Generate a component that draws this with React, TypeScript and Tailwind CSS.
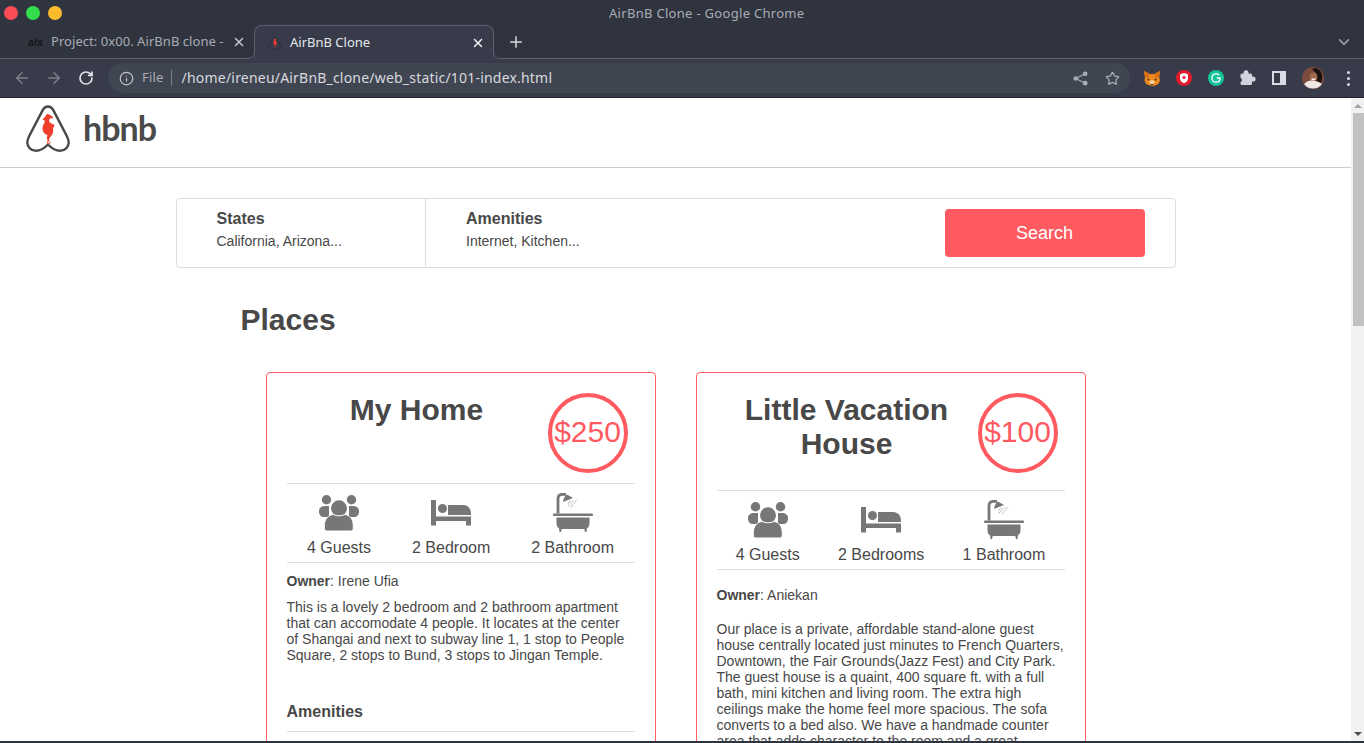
import { ArrowLeft, ArrowRight, ChevronDown, Info, Plus, RotateCw, Star, X } from 'lucide-react';

const chromeFont = 'font-["Noto_Sans",sans-serif]';

function AirLogo({ className, stroke = '#484848', mark = '#f03e2b' }: { className: string; stroke?: string; mark?: string }) {
  return (
    <svg viewBox="0 0 44 47" className={className} fill="none">
      <path
        d="M22 1.500c-2.600 0-4.200 1.500-5.300 3.600L3.200 31c-1.300 2.600-1.900 4.400-1.900 6.400 0 4.800 3.800 8.400 8.600 8.400 4.300 0 8.300-2.300 12.100-6.300 3.800 4 7.800 6.300 12.100 6.300 4.800 0 8.600-3.600 8.600-8.400 0-2-.6-3.800-1.900-6.400L27.300 5.100C26.200 3 24.600 1.500 22 1.500z"
        stroke={stroke}
        strokeWidth="2.400"
      />
      <path
        d="M20.500 9C23 9 25.500 10.500 27.500 13L24 13.500c-1 .8-1 2.200-.5 3.500 1.500 1.500 3 2.500 4 2l1 2-1.500 2c.7 3 0 5.500-1.500 7.500-1.500 1.800-2.700 3-2.500 5.500l-1.500-.5c-1-2.500-.5-4.200 0-5.500-2.800-.5-4.800-3-5-6.500-.1-3 1.500-4.500 2.300-6.500.2-1.500-1.300-2.500-2.300-2.500 1.500-1.500 3-3 4-5z"
        fill={mark}
      />
      <circle cx="22.500" cy="37.500" r="1.400" stroke={mark} strokeWidth="1" />
    </svg>
  );
}

function GuestsIcon() {
  return (
    <svg viewBox="0 0 40 37" className="h-[37px] w-[40px]" fill="#777777">
      <circle cx="7.500" cy="4.800" r="4.700" />
      <circle cx="32.500" cy="4.800" r="4.700" />
      <path d="M0 16c0-3 2.500-5 6-5h4v11H5c-3 0-5-2-5-6z" />
      <path d="M40 16c0-3-2.500-5-6-5h-4v11h5c3 0 5-2 5-6z" />
      <circle cx="20" cy="13.300" r="9" stroke="#ffffff" strokeWidth="2" />
      <path
        d="M5.300 31c0-7 4-11 9-11.500 3.500 1.800 8 1.800 11.500 0 5 .5 8.500 4.500 8.500 11.500v2c0 2-1 3-3 3H8.300c-2 0-3-1-3-3z"
        stroke="#ffffff"
        strokeWidth="1"
      />
    </svg>
  );
}

function BedIcon() {
  return (
    <svg viewBox="0 0 40 26" className="h-[26px] w-[40px]" fill="#777777">
      <rect x="0" y="0" width="5" height="25.500" />
      <circle cx="11.500" cy="8.500" r="4.500" />
      <path d="M17 5h15c5 0 8 3.500 8 9v1H17z" />
      <path d="M5 16.500h35V25.500h-5V21H5z" />
    </svg>
  );
}

function BathIcon() {
  return (
    <svg viewBox="0 0 40 40" className="h-[40px] w-[40px]" fill="#777777">
      <rect x="0" y="20.500" width="40" height="2.500" rx="1" />
      <path d="M3.500 24.500h33V30c0 4-2 6-6 6H9.500c-4 0-6-2-6-6z" />
      <path d="M6 35h3l-1 4H6.500zM31 35h3l-.5 4H32z" />
      <path d="M5 20.500V6C5 2.800 7 1.300 9.500 1.300H13" fill="none" stroke="#777777" strokeWidth="2.800" />
      <path d="M10 9c.5-4 2-6.500 4-7.500L20 5z" />
      <path d="M15 13l6-6M18 14l6-7M15 10l3-3" fill="none" stroke="#aaaaaa" strokeWidth="1.300" strokeDasharray="1 1.200" />
    </svg>
  );
}

function Stat({ icon, label }: { icon: React.ReactNode; label: string }) {
  return (
    <div className="flex flex-col items-center">
      <div className="flex h-[52px] items-center">{icon}</div>
      <span className="text-base leading-[18px]">{label}</span>
    </div>
  );
}

function PlaceCard({
  title,
  price,
  stats,
  owner,
  headerClass,
  ownerClass,
  children,
}: {
  title: string;
  price: string;
  stats: React.ReactNode;
  owner: string;
  headerClass: string;
  ownerClass: string;
  children: React.ReactNode;
}) {
  return (
    <article className="w-[390px] shrink-0 rounded border border-[#ff5a5f] px-5 pt-5 pb-5">
      <div className={`flex items-start ${headerClass}`}>
        <h2 className="w-[260px] text-center text-[30px] font-bold leading-[34px]">{title}</h2>
        <div className="ml-px flex h-20 w-20 shrink-0 items-center justify-center rounded-full border-4 border-[#ff5a5f] pb-1 text-[30px] text-[#ff5a5f]">
          {price}
        </div>
      </div>
      <div className="flex h-[80px] justify-around border-y border-[#dddddd] pt-[3px]">{stats}</div>
      <p className={`text-sm leading-4 ${ownerClass}`}>
        <b>Owner</b>: {owner}
      </p>
      {children}
    </article>
  );
}

export default function App() {
  return (
    <div className="flex h-[743px] w-[1364px] flex-col overflow-hidden bg-white font-['Liberation_Sans',sans-serif] text-[#484848]">
      {/* window title + tabs */}
      <div className={`bg-[#2f343f] ${chromeFont}`}>
        <div className="relative flex h-[25px] items-center pl-[4px]">
          <div className="flex gap-2">
            <span className="h-[14px] w-[14px] rounded-full bg-[#fc4c56]" />
            <span className="h-[14px] w-[14px] rounded-full bg-[#33de4a]" />
            <span className="h-[14px] w-[14px] rounded-full bg-[#fdbc2e]" />
          </div>
          <span className="absolute left-[609px] top-[5px] text-[13px] leading-4 tracking-[0.3px] text-[#a9acb4]">
            AirBnB Clone - Google Chrome
          </span>
        </div>
        <div className="flex h-[34px] items-center border-b border-[#5c606c] pl-[14px]">
          <div className="flex h-full w-[240px] items-center pl-[14px] pr-[8px]">
            <span className="w-[23px] text-[10px] font-bold leading-none text-[#14161b]">alx</span>
            <span className="whitespace-nowrap text-[13px] tracking-[0.05px] text-[#a9acb4]">Project: 0x00. AirBnB clone -</span>
            <X className="ml-auto h-[14px] w-[14px] text-[#c5c7cd]" strokeWidth={2.5} />
          </div>
          <div className="relative flex h-[34px] w-[240px] self-start items-center rounded-t-lg border border-b-0 border-[#5c606c] bg-[#383c4a] pl-[13px] pr-[8px]">
            <svg viewBox="0 0 8 8" className="absolute -left-[8px] bottom-0 h-2 w-2">
              <path d="M0 7.500C5 7.500 7.500 5 7.500 0V8H0z" fill="#383c4a" />
              <path d="M0 7.500C5 7.500 7.500 5 7.500 0" fill="none" stroke="#5c606c" />
            </svg>
            <svg viewBox="0 0 8 8" className="absolute -right-[8px] bottom-0 h-2 w-2">
              <path d="M8 7.500C3 7.500 .5 5 .5 0V8H8z" fill="#383c4a" />
              <path d="M8 7.500C3 7.500 .5 5 .5 0" fill="none" stroke="#5c606c" />
            </svg>
            <AirLogo className="h-[14px] w-[14px]" stroke="#2a2d36" />
            <span className="ml-[8px] text-[13px] text-[#e6e7ea]">AirBnB Clone</span>
            <X className="ml-auto h-[14px] w-[14px] text-[#f0f0f2]" strokeWidth={2.5} />
          </div>
          <Plus className="ml-[13px] h-[18px] w-[18px] text-[#d8dade]" strokeWidth={2} />
          <ChevronDown className="ml-auto mr-[11px] h-[18px] w-[18px] text-[#a9acb4]" strokeWidth={2} />
        </div>
      </div>

      {/* toolbar */}
      <div className={`flex h-[39px] shrink-0 items-center border-b border-[#20232b] bg-[#383c4a] pl-[13px] ${chromeFont}`}>
        <ArrowLeft className="h-[18px] w-[18px] text-[#7d808b]" strokeWidth={2} />
        <ArrowRight className="ml-[14px] h-[18px] w-[18px] text-[#7d808b]" strokeWidth={2} />
        <RotateCw className="ml-[15px] h-[16px] w-[16px] text-[#e0e1e5]" strokeWidth={2.6} />
        <div className="ml-[14px] flex h-[30px] w-[1022px] items-center rounded-full bg-[#404552] pl-[11px] pr-[10px]">
          <Info className="h-[15px] w-[15px] text-[#c2c4ca]" strokeWidth={2} />
          <span className="ml-[8px] text-[13px] tracking-[0.2px] text-[#a9acb4]">File</span>
          <span className="ml-[7px] h-[16px] w-px bg-[#7d808b]" />
          <span className="ml-[10px] text-sm tracking-[0.2px] text-[#d8dade]">/home/ireneu/AirBnB_clone/web_static/101-index.html</span>
          <svg viewBox="0 0 16 16" className="ml-auto h-[15px] w-[15px]" fill="#a9acb4">
            <circle cx="13" cy="3" r="2.500" />
            <circle cx="3" cy="8" r="2.500" />
            <circle cx="13" cy="13" r="2.500" />
            <path d="M3 8l10-5M3 8l10 5" stroke="#a9acb4" strokeWidth="1.200" />
          </svg>
          <Star className="ml-[17px] h-[15px] w-[15px] text-[#a9acb4]" strokeWidth={2} />
        </div>
        <div className="ml-[14px] flex items-center gap-[16px]">
          <svg viewBox="0 0 16 15" className="h-[15px] w-4">
            <path d="M0 0l6 3h4l6-3-.8 6 .8 3.500-1.500 3.500-3.500 1.500-2.500 .5-2.500-.5L2 13 .5 9.500 1 6z" fill="#ee8a1e" />
            <path d="M0 0l6 3-2 4-3-1zM16 0l-6 3 2 4 3-1z" fill="#d9701a" />
            <path d="M5 10.500l3 4 3-4-3-1.500z" fill="#f8d3ab" />
            <path d="M6.500 13h3L8 14.500z" fill="#2f2318" />
            <path d="M3 7l3 1.500-2 1.500zM13 7l-3 1.500 2 1.500z" fill="#6b3a18" />
          </svg>
          <svg viewBox="0 0 16 16" className="h-4 w-4">
            <circle cx="8" cy="8" r="8" fill="#e11a2c" />
            <path d="M8 3l4 1.300v4C12 11 10 12.300 8 13.200 6 12.300 4 11 4 8.300v-4z" fill="#ffffff" />
            <circle cx="8" cy="7.500" r="1.600" fill="#e11a2c" />
          </svg>
          <svg viewBox="0 0 16 16" className="h-4 w-4" fill="none">
            <circle cx="8" cy="8" r="8" fill="#15c39a" />
            <path d="M11.200 5C10.400 4.200 9.300 3.800 8 3.800 5.700 3.800 3.900 5.700 3.900 8s1.800 4.200 4.100 4.200c2.300 0 4.100-1.700 4.100-4.200H8.800" stroke="#ffffff" strokeWidth="1.300" />
          </svg>
          <svg viewBox="0 0 16 16" className="h-4 w-4" fill="#d0d3dc">
            <rect x="0.500" y="3.500" width="11.500" height="11.500" rx="1.500" />
            <circle cx="6" cy="2.800" r="2.500" />
            <circle cx="13" cy="9" r="2.600" />
            <circle cx="0" cy="10" r="2" fill="#383c4a" />
          </svg>
          <span className="flex h-[14px] w-[14px] justify-end border-[2px] border-[#d8dce6]">
            <span className="h-full w-[4px] bg-[#d8dce6]" />
          </span>
          <svg viewBox="0 0 22 22" className="h-[22px] w-[22px]">
            <circle cx="11" cy="11" r="11" fill="#7c4a3f" />
            <path d="M10 2c4-2 9 1 10 6 .5 4-.5 8-3 10l-3-4c1.500-3 1-7-1-9z" fill="#17100e" />
            <ellipse cx="11.500" cy="10" rx="4" ry="4.500" fill="#a06a4c" />
            <path d="M9 11.500h5l-1 1.500h-3z" fill="#f5eee8" />
            <path d="M2 17c3-3 6-4 9-3.500 3 .5 6 1 9 3.500-4 6-14 6-18 0z" fill="#f1e8e4" />
          </svg>
          <span className="flex w-4 flex-col items-center gap-[3px]">
            <span className="h-[3px] w-[3px] rounded-full bg-[#d8dce6]" />
            <span className="h-[3px] w-[3px] rounded-full bg-[#d8dce6]" />
            <span className="h-[3px] w-[3px] rounded-full bg-[#d8dce6]" />
          </span>
        </div>
      </div>

      <div className="flex min-h-0 flex-1">
        <div className="min-w-0 flex-1 overflow-hidden">
          <header className="flex h-[70px] items-start border-b border-[#cccccc] pl-[26px] pt-[7px]">
            <AirLogo className="h-[47px] w-[44px]" />
            <span className="ml-[13px] mt-[1px] font-['Lato',sans-serif] text-[34px] font-bold leading-[44px] tracking-[-1px] text-[#4a4a4a]">
              hbnb
            </span>
          </header>

          <div className="mx-auto w-[1000px]">
            <section className="mt-[30px] flex h-[70px] rounded border border-[#dddddd]">
              <div className="h-full w-[249px] border-r border-[#dddddd] pl-[40px] pt-[10px]">
                <h3 className="text-base font-bold leading-[20px]">States</h3>
                <p className="mt-[2px] text-sm leading-[20px]">California, Arizona...</p>
              </div>
              <div className="flex-1 pl-[40.500px] pt-[10px]">
                <h3 className="text-base font-bold leading-[20px]">Amenities</h3>
                <p className="mt-[2px] text-sm leading-[20px]">Internet, Kitchen...</p>
              </div>
              <button className="mr-[30px] mt-[10px] h-[48px] w-[200px] rounded bg-[#ff5a5f] text-lg text-white">Search</button>
            </section>

            <h1 className="ml-[65px] mt-[34px] text-[30px] font-bold leading-[36px]">Places</h1>

            <div className="ml-[90px] mt-[34px] flex items-start gap-[40px]">
              <PlaceCard
                title="My Home"
                price="$250"
                owner="Irene Ufia"
                headerClass="mb-[10px]"
                ownerClass="mt-[10px]"
                stats={
                  <>
                    <Stat icon={<GuestsIcon />} label="4 Guests" />
                    <Stat icon={<BedIcon />} label="2 Bedroom" />
                    <Stat icon={<BathIcon />} label="2 Bathroom" />
                  </>
                }
              >
                <p className="mt-[10px] text-sm leading-4">
                  This is a lovely 2 bedroom and 2 bathroom apartment that can accomodate 4 people. It locates at the center of Shangai and next to
                  subway line 1, 1 stop to People Square, 2 stops to Bund, 3 stops to Jingan Temple.
                </p>
                <h3 className="mt-[39px] border-b border-[#dddddd] pb-[9px] text-base font-bold leading-[20px]">Amenities</h3>
              </PlaceCard>
              <PlaceCard
                title="Little Vacation House"
                price="$100"
                owner="Aniekan"
                headerClass="mb-[17px]"
                ownerClass="mt-[17px]"
                stats={
                  <>
                    <Stat icon={<GuestsIcon />} label="4 Guests" />
                    <Stat icon={<BedIcon />} label="2 Bedrooms" />
                    <Stat icon={<BathIcon />} label="1 Bathroom" />
                  </>
                }
              >
                <p className="mt-[18px] text-sm leading-4">
                  Our place is a private, affordable stand-alone guest house centrally located just minutes to French Quarters, Downtown, the Fair
                  Grounds(Jazz Fest) and City Park. The guest house is a quaint, 400 square ft. with a full bath, mini kitchen and living room. The
                  extra high ceilings make the home feel more spacious. The sofa converts to a bed also. We have a handmade counter area that adds
                  character to the room and a great
                </p>
              </PlaceCard>
            </div>
          </div>
        </div>

        {/* scrollbar */}
        <div className="flex w-[13px] shrink-0 flex-col items-end bg-[#f1f1f1]">
          <div className="flex h-[15px] w-full items-center justify-center">
            <span className="h-0 w-0 border-x-[4px] border-b-[4px] border-x-transparent border-b-[#a3a3a3]" />
          </div>
          <div className="h-[213px] w-[11px] bg-[#c1c1c1]" />
          <div className="mt-auto flex h-[15px] w-full items-center justify-center">
            <span className="h-0 w-0 border-x-[4px] border-t-[4px] border-x-transparent border-t-[#505050]" />
          </div>
        </div>
      </div>
      <div className="h-[2px] shrink-0 bg-[#2f343f]" />
    </div>
  );
}
